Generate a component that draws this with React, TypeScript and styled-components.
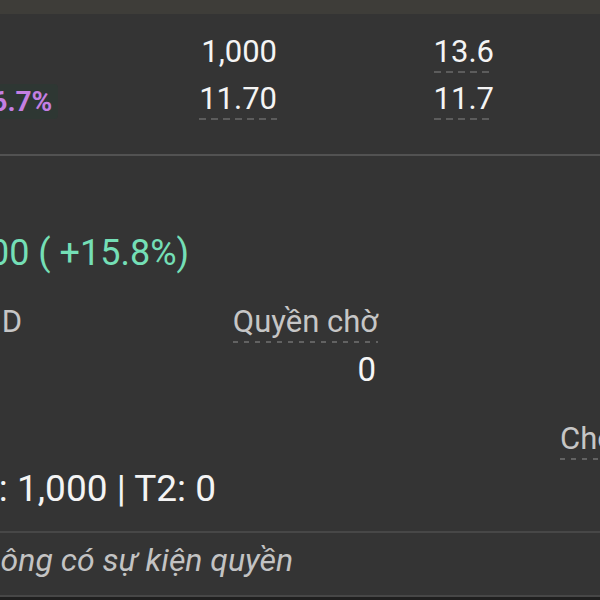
import styled, { createGlobalStyle } from 'styled-components'

const GlobalStyle = createGlobalStyle`
  html, body {
    margin: 0;
    padding: 0;
    background: #343434;
    overflow: hidden;
  }
  body {
    font-family: Roboto, "Noto Sans", "Liberation Sans", sans-serif;
  }
`

const Screen = styled.div`
  width: 600px;
  height: 600px;
  overflow: hidden;
  background: #343434;
  display: flex;
  flex-direction: column;
`

const TopBand = styled.div`
  height: 14px;
  flex-shrink: 0;
  background: #3e3d39;
`

const QuoteTable = styled.div`
  display: grid;
  grid-template-columns: 180px 97px 217px 1fr;
  row-gap: 10px;
  align-items: start;
  padding: 22px 0 34px;
`

const dashes = (color: string, dash: number, gap: number, size: number) =>
  `repeating-linear-gradient(90deg, ${color} 0 ${dash}px, transparent ${dash}px ${dash + gap}px) left bottom / 100% ${size}px no-repeat`

const Num = styled.span<{ $col: number; $dashed?: boolean }>`
  grid-column: ${(p) => p.$col};
  justify-self: end;
  font-size: 31px;
  line-height: 31px;
  padding-bottom: 6px;
  color: #f4f4f4;
  white-space: nowrap;
  background: ${(p) => (p.$dashed ? dashes('#5c5c5c', 7, 5, 2) : 'none')};
`

const ChangePill = styled.span`
  grid-column: 1;
  justify-self: start;
  align-self: center;
  margin-left: -46px;
  height: 35px;
  line-height: 35px;
  padding: 0 6px;
  border-radius: 4px;
  background: #2e3733;
  color: #c47fe2;
  font-size: 28px;
  font-weight: 700;
  white-space: nowrap;
`

const Divider = styled.div<{ $tone?: string }>`
  height: 2px;
  flex-shrink: 0;
  background: ${(p) => p.$tone ?? '#4b4b4b'};
`

const Holding = styled.div`
  display: grid;
  grid-template-columns: 180px 198px 182px 1fr;
  grid-template-rows: 71px 48px 69px 47px 61px;
  align-items: start;
  padding-top: 79px;
`

const ProfitLine = styled.span`
  grid-column: 1 / -1;
  grid-row: 1;
  justify-self: start;
  margin-left: -79px;
  font-size: 36px;
  line-height: 36px;
  color: #74dfb6;
  white-space: nowrap;
`

const Label = styled.span<{ $col: number; $row: number; $align?: string; $cut?: number; $dashed?: boolean }>`
  grid-column: ${(p) => p.$col};
  grid-row: ${(p) => p.$row};
  justify-self: ${(p) => p.$align ?? 'start'};
  margin-left: ${(p) => -(p.$cut ?? 0)}px;
  font-size: 31px;
  line-height: 31px;
  padding-bottom: 6px;
  color: #c6c6c6;
  white-space: nowrap;
  background: ${(p) => (p.$dashed ? dashes('#626262', 5, 6, 2) : 'none')};
`

const Value = styled.span<{ $col: number; $row: number }>`
  grid-column: ${(p) => p.$col};
  grid-row: ${(p) => p.$row};
  justify-self: end;
  margin-right: 2px;
  font-size: 33px;
  line-height: 32px;
  color: #f6f6f6;
`

const Settlement = styled.span`
  grid-column: 1 / -1;
  grid-row: 5;
  justify-self: start;
  margin-left: -44px;
  font-size: 37px;
  line-height: 37px;
  color: #f4f4f4;
  white-space: nowrap;
`

const EventRow = styled.div`
  height: 62px;
  flex-shrink: 0;
  padding-top: 11px;
  box-sizing: border-box;
`

const EmptyNote = styled.span`
  display: inline-block;
  margin-left: -36px;
  font-size: 32px;
  line-height: 32px;
  font-style: italic;
  color: #c3c3c3;
  white-space: nowrap;
`

const BottomShade = styled.div`
  flex: 1;
  background: #1f1f1f;
`

export default function App() {
  return (
    <>
      <GlobalStyle />
      <Screen>
        <TopBand />
        <QuoteTable>
          <Num $col={2}>1,000</Num>
          <Num $col={3} $dashed>
            13.6
          </Num>
          <ChangePill>+16.7%</ChangePill>
          <Num $col={2} $dashed>
            11.70
          </Num>
          <Num $col={3} $dashed>
            11.7
          </Num>
        </QuoteTable>
        <Divider $tone="#525252" />
        <Holding>
          <ProfitLine>+1,900 ( +15.8%)</ProfitLine>
          <Label $col={1} $row={2} $cut={40}>
            VND
          </Label>
          <Label $col={2} $row={2} $align="end" $dashed>
            Quyền chờ
          </Label>
          <Value $col={2} $row={3}>0</Value>
          <Label $col={4} $row={4} $dashed>
            Chờ về
          </Label>
          <Settlement>T0: 1,000 | T2: 0</Settlement>
        </Holding>
        <Divider $tone="#474747" />
        <EventRow>
          <EmptyNote>Không có sự kiện quyền</EmptyNote>
        </EventRow>
        <Divider $tone="#474747" />
        <BottomShade />
      </Screen>
    </>
  )
}
